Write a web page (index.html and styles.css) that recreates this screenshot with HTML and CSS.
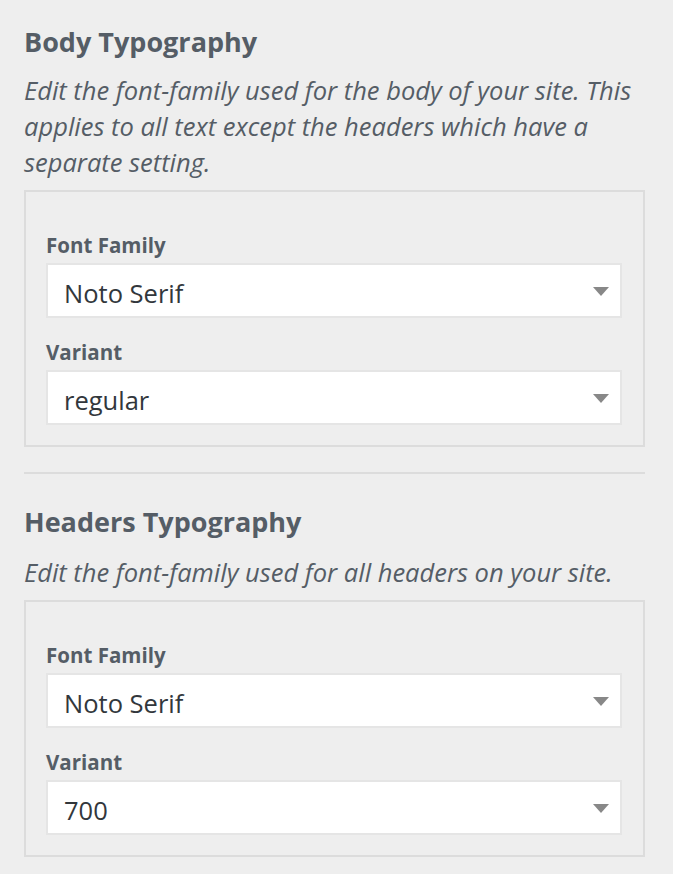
FILE: index.html
```html
<!DOCTYPE html>
<html lang="en">
<head>
<meta charset="utf-8">
<title>Typography</title>
<link rel="stylesheet" href="styles.css">
</head>
<body>
<div class="panel">
  <section class="section">
    <h2 class="title">Body Typography</h2>
    <p class="desc">Edit the font-family used for the body of your site. This applies to all text except the headers which have a separate setting.</p>
    <div class="box">
      <div class="field">
        <div class="label">Font Family</div>
        <div class="select"><span class="value">Noto Serif</span><svg class="arrow" width="16" height="9" viewBox="0 0 16 9"><path d="M0 0H16L8 9Z" fill="#888"/></svg></div>
      </div>
      <div class="field">
        <div class="label">Variant</div>
        <div class="select"><span class="value">regular</span><svg class="arrow" width="16" height="9" viewBox="0 0 16 9"><path d="M0 0H16L8 9Z" fill="#888"/></svg></div>
      </div>
    </div>
  </section>
  <section class="section section-sep">
    <h2 class="title">Headers Typography</h2>
    <p class="desc">Edit the font-family used for all headers on your site.</p>
    <div class="box">
      <div class="field">
        <div class="label">Font Family</div>
        <div class="select"><span class="value">Noto Serif</span><svg class="arrow" width="16" height="9" viewBox="0 0 16 9"><path d="M0 0H16L8 9Z" fill="#888"/></svg></div>
      </div>
      <div class="field">
        <div class="label">Variant</div>
        <div class="select"><span class="value">700</span><svg class="arrow" width="16" height="9" viewBox="0 0 16 9"><path d="M0 0H16L8 9Z" fill="#888"/></svg></div>
      </div>
    </div>
  </section>
</div>
</body>
</html>
```

FILE: styles.css
```css
html, body {
  margin: 0;
  padding: 0;
  background: #eeeeee;
}
body {
  font-family: "Open Sans", "Noto Sans", sans-serif;
  color: #555d66;
}
.panel {
  width: 621px;
  padding: 23.5px 28px 0 24px;
}
.title {
  margin: 0;
  font-size: 27px;
  line-height: 36px;
  font-weight: 700;
  color: #555d66;
}
.desc {
  margin: 12.6px 0 9.9px;
  font-size: 25.5px;
  line-height: 36px;
  font-style: italic;
  color: #555d66;
}
.box {
  border: 2px solid #dcdcdc;
  padding: 19px 21px 20px 20px;
}
.label {
  margin: 20px 0 4px;
  font-size: 20.5px;
  line-height: 28px;
  font-weight: 700;
  color: #555d66;
}
.select {
  box-sizing: border-box;
  height: 55px;
  background: #fff;
  border: 2px solid #e5e5e5;
  padding: 7px 11px 0 16px;
  display: flex;
  align-items: flex-start;
  justify-content: space-between;
}
.value {
  font-size: 25.5px;
  line-height: 42px;
  color: #32373c;
}
.arrow {
  margin-top: 15px;
  display: block;
}
.section-sep {
  margin-top: 25px;
  border-top: 2px solid #dcdcdc;
  padding-top: 30.5px;
}
.section-sep .desc {
  margin: 13.6px 0 10.2px;
}
```
